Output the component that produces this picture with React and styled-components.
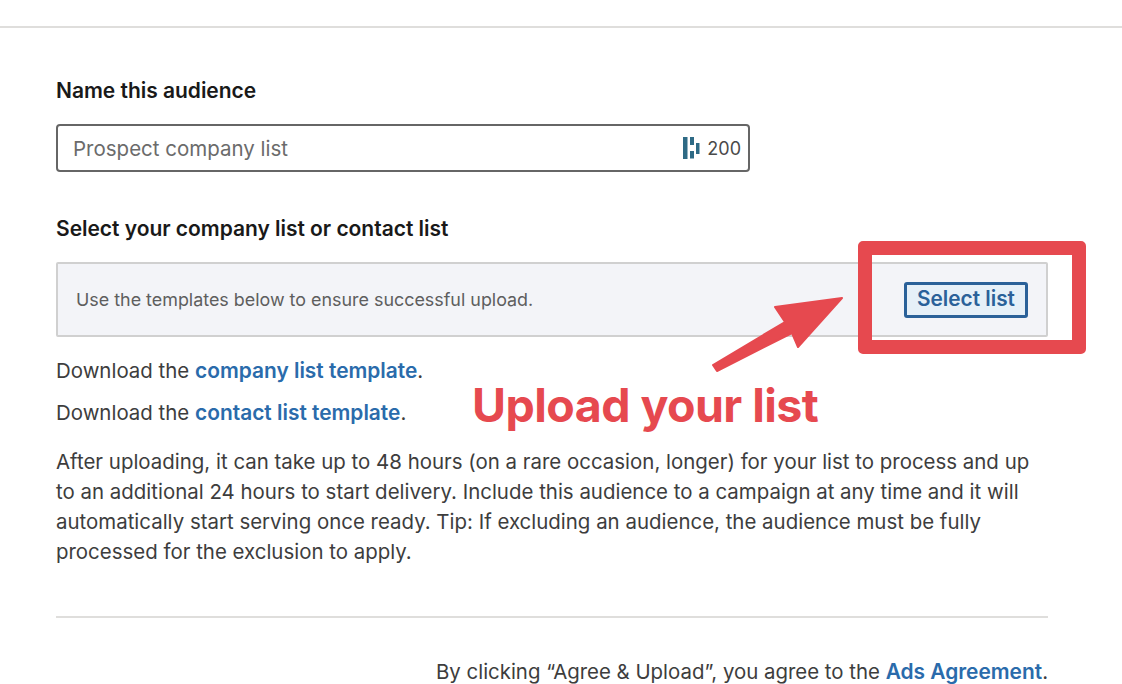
import React from 'react';
import styled, { createGlobalStyle } from 'styled-components';

const GlobalStyle = createGlobalStyle`
html, body {
  margin: 0;
  padding: 0;
  background: #fff;
  overflow: hidden;
}
body {
  font-family: Inter, "Liberation Sans", sans-serif;
}
`;

const Page = styled.div`
position: relative;
width: 1122px;
height: 684px;
overflow: hidden;
box-sizing: border-box;
padding-top: 26px;
`;

const TopRule = styled.div`
height: 2px;
background: #dfdedc;
`;

const Content = styled.div`
width: 992px;
margin-left: 56px;
padding-top: 50px;
`;

const Label = styled.div`
font-size: 21px;
line-height: 26px;
font-weight: 600;
color: #191919;
letter-spacing: -0.03px;
`;

const NameField = styled.div`
box-sizing: border-box;
width: 694px;
height: 48px;
margin-top: 20px;
margin-bottom: 44px;
border: 2px solid #666;
border-radius: 4px;
padding: 0 7px 0 15px;
display: flex;
align-items: center;
justify-content: space-between;
`;

const Placeholder = styled.span`
font-size: 20.5px;
color: #6b6b6b;
`;

const Counter = styled.span`
display: flex;
align-items: center;
gap: 7px;
font-size: 18px;
color: #4a4a4a;
`;

const UploadBox = styled.div`
box-sizing: border-box;
height: 75px;
margin-top: 20px;
margin-bottom: 21px;
background: #f3f4f8;
border: 2px solid #d0d0d0;
border-radius: 2px;
padding: 0 18px;
display: flex;
align-items: center;
justify-content: space-between;
`;

const Hint = styled.span`
font-size: 17.9px;
color: #5e5e5e;
`;

const SelectButton = styled.button`
box-sizing: border-box;
width: 124px;
height: 36px;
background: #e6f0f8;
border: 3px solid #2a6199;
border-radius: 3px;
color: #2a6199;
font-family: inherit;
font-size: 20.8px;
font-weight: 600;
padding: 0 0 2px;
`;

const Line = styled.p`
margin: 0 0 16px;
font-size: 20.45px;
line-height: 26px;
color: #3d3d3d;
`;

const Link = styled.a`
color: #2a6bab;
font-weight: 600;
font-size: 20.9px;
`;

const Paragraph = styled.p`
margin: 21px 0 0;
width: 992px;
font-size: 20.45px;
line-height: 30px;
color: #3d3d3d;
`;

const Divider = styled.div`
height: 2px;
background: #dfdedc;
margin-top: 49px;
`;

const Agreement = styled.p`
margin: 41px 0 0;
text-align: right;
font-size: 20.4px;
line-height: 26px;
color: #3d3d3d;
`;

const Highlight = styled.div`
position: absolute;
left: 858px;
top: 241px;
width: 228px;
height: 113px;
box-sizing: border-box;
border: 14px solid #e6494f;
border-radius: 5px;
`;

const ArrowSvg = styled.svg`
position: absolute;
left: 700px;
top: 285px;
`;

const Callout = styled.div`
position: absolute;
left: 472px;
top: 376px;
font-size: 46.5px;
line-height: 58px;
font-weight: 700;
color: #e6494f;
letter-spacing: -0.55px;
white-space: nowrap;
`;

function BrandMark() {
  return (
    <svg width="17" height="22" viewBox="0 0 17 22">
      <path fill="#2e6a85" d="M0 0h4.5v22H0zM7 0h4v8H7zM7 14h4v7.5H7zM13 6h3.5v11H13z" />
    </svg>
  );
}

export default function App() {
  return (
    <Page>
      <GlobalStyle />
      <TopRule />
      <Content>
        <Label>Name this audience</Label>
        <NameField>
          <Placeholder>Prospect company list</Placeholder>
          <Counter>
            <BrandMark />
            200
          </Counter>
        </NameField>
        <Label>Select your company list or contact list</Label>
        <UploadBox>
          <Hint>Use the templates below to ensure successful upload.</Hint>
          <SelectButton>Select list</SelectButton>
        </UploadBox>
        <Line>
          Download the <Link>company list template</Link>.
        </Line>
        <Line>
          Download the <Link>contact list template</Link>.
        </Line>
        <Paragraph>
          After uploading, it can take up to 48 hours (on a rare occasion, longer) for your list to process and up
          to an additional 24 hours to start delivery. Include this audience to a campaign at any time and it will
          automatically start serving once ready. Tip: If excluding an audience, the audience must be fully
          processed for the exclusion to apply.
        </Paragraph>
        <Divider />
        <Agreement>
          By clicking “Agree &amp; Upload”, you agree to the <Link>Ads Agreement</Link>.
        </Agreement>
      </Content>
      <Highlight />
      <ArrowSvg width="150" height="90" viewBox="0 0 150 90">
        <path
          fill="#e6494f"
          stroke="#e6494f"
          strokeWidth="2"
          strokeLinejoin="round"
          d="M142 13L75 22L85 37L13 80L17 86L92 48L98 62Z"
        />
      </ArrowSvg>
      <Callout>Upload your list</Callout>
    </Page>
  );
}
